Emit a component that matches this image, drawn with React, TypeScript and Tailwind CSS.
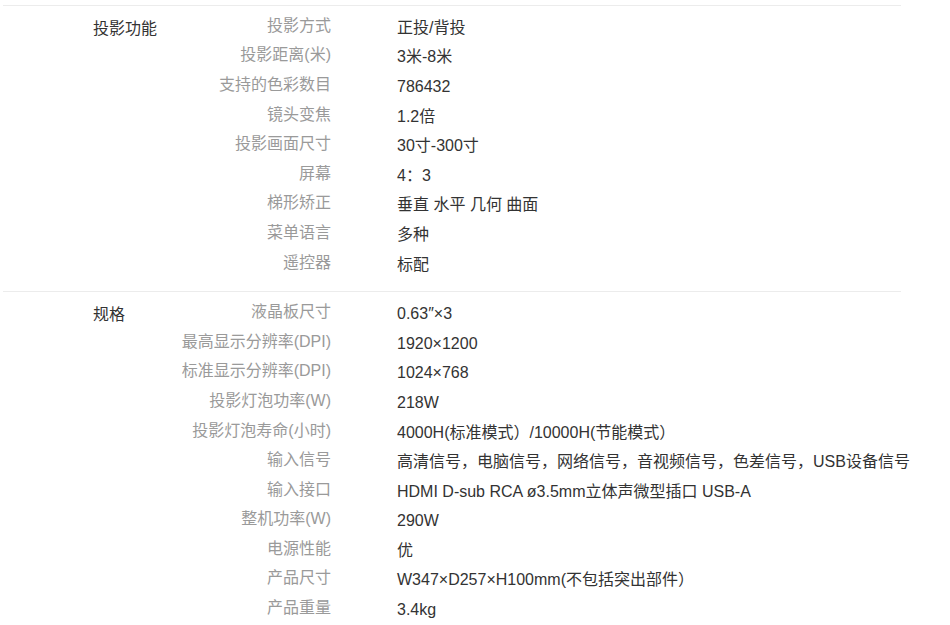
const sections = [
  {
    title: "投影功能",
    rows: [
      ["投影方式", "正投/背投"],
      ["投影距离(米)", "3米-8米"],
      ["支持的色彩数目", "786432"],
      ["镜头变焦", "1.2倍"],
      ["投影画面尺寸", "30寸-300寸"],
      ["屏幕", "4：3"],
      ["梯形矫正", "垂直 水平 几何 曲面"],
      ["菜单语言", "多种"],
      ["遥控器", "标配"],
    ],
  },
  {
    title: "规格",
    rows: [
      ["液晶板尺寸", "0.63″×3"],
      ["最高显示分辨率(DPI)", "1920×1200"],
      ["标准显示分辨率(DPI)", "1024×768"],
      ["投影灯泡功率(W)", "218W"],
      ["投影灯泡寿命(小时)", "4000H(标准模式）/10000H(节能模式）"],
      ["输入信号", "高清信号，电脑信号，网络信号，音视频信号，色差信号，USB设备信号"],
      ["输入接口", "HDMI D-sub RCA ø3.5mm立体声微型插口 USB-A"],
      ["整机功率(W)", "290W"],
      ["电源性能", "优"],
      ["产品尺寸", "W347×D257×H100mm(不包括突出部件）"],
      ["产品重量", "3.4kg"],
    ],
  },
];

export default function App() {
  return (
    <div
      className="w-[950px] h-[625px] bg-white overflow-hidden pt-[5px] text-[16px]"
      style={{ fontFamily: '"Liberation Sans", Arial, "Noto Sans CJK SC", sans-serif' }}
    >
      {sections.map((section) => (
        <div key={section.title} className="ml-[3px] w-[898px] border-t border-[#ececec] pt-[6px] pb-[13px] flex">
          <div className="w-[160px] shrink-0 pl-[90px] text-[#333] leading-[29.6px] mt-[2px]">
            {section.title}
          </div>
          <div className="flex-1">
            {section.rows.map(([label, value]) => (
              <div key={label} className="h-[29.6px] flex items-center">
                <div className="w-[168px] shrink-0 text-right text-[#9a9a9a] relative -top-[1px] whitespace-nowrap">
                  {label}
                </div>
                <div className="pl-[66px] text-[#333] relative top-[1px] whitespace-nowrap">
                  {value}
                </div>
              </div>
            ))}
          </div>
        </div>
      ))}
    </div>
  );
}
